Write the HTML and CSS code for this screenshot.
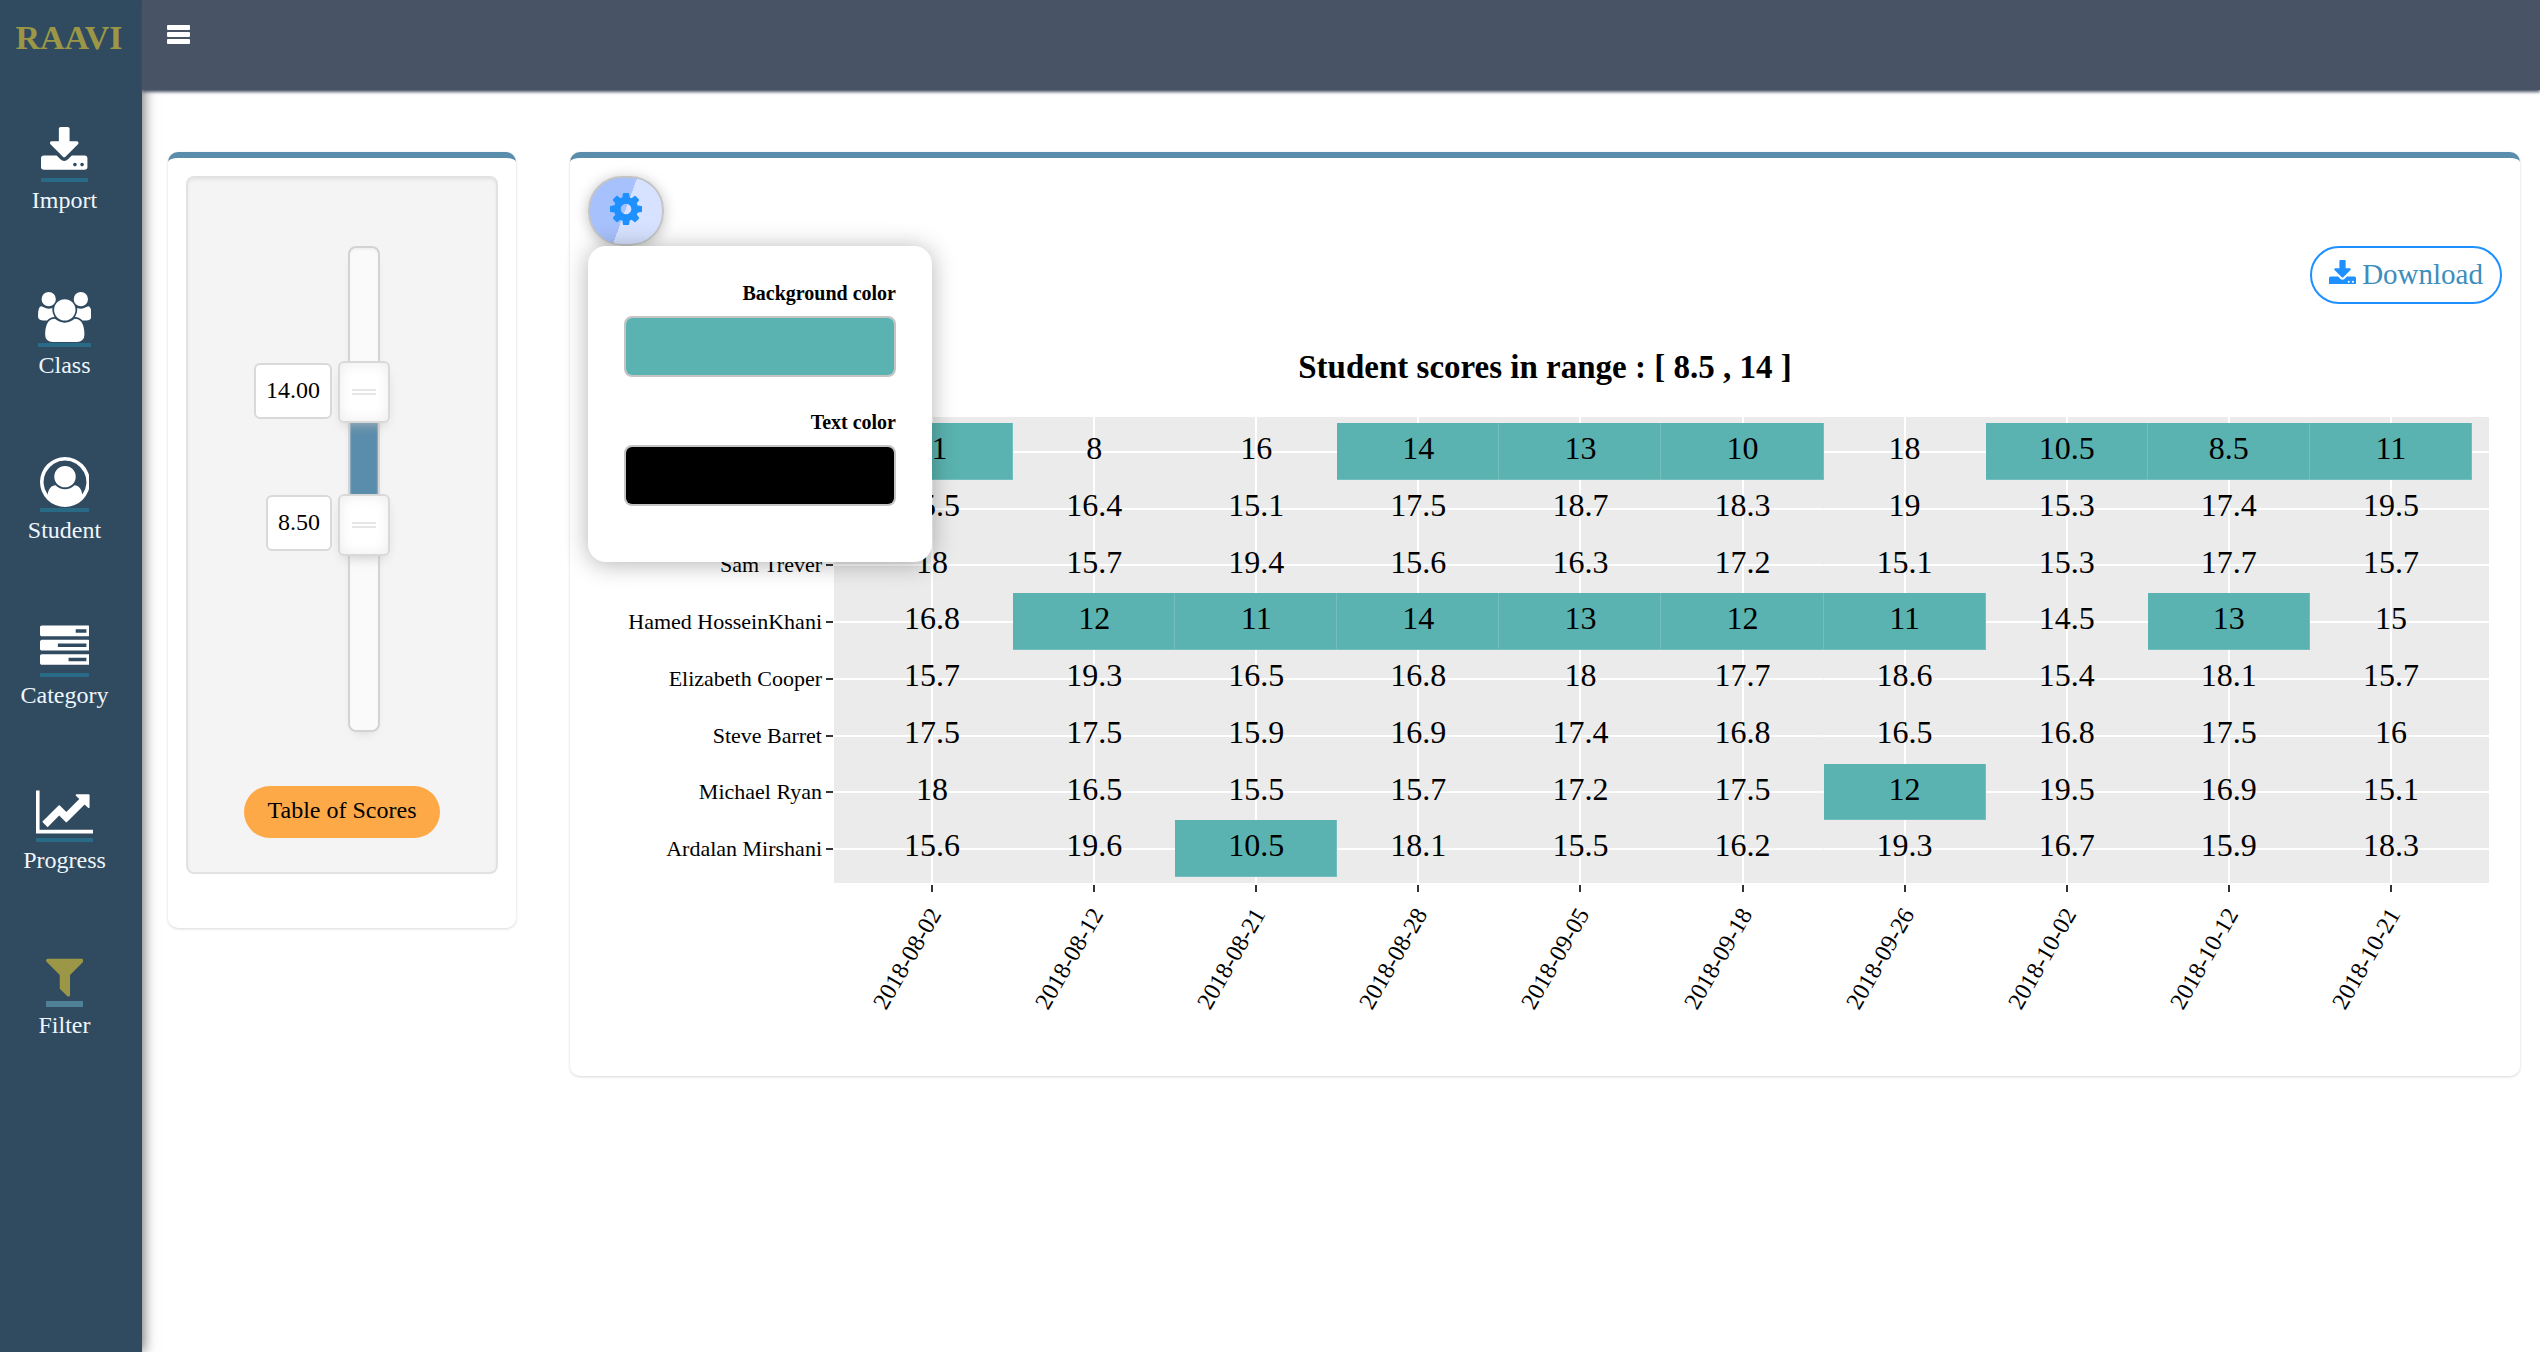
FILE: index.html
```html
<!DOCTYPE html>
<html lang="en">
<head>
<meta charset="utf-8">
<title>RAAVI</title>
<meta name="viewport" content="width=device-width, initial-scale=1">
<link rel="stylesheet" href="styles.css">
</head>
<body>
<div class="app">
  <aside class="sidebar">
    <a class="brand" href="#">RAAVI</a>
    <nav class="nav">
      <a class="nav-item" href="#">
        <svg class="nav-icon" viewBox="64 0 1664 1828" aria-hidden="true"><path d="M1344 1344q0-26-19-45t-45-19-45 19-19 45 19 45 45 19 45-19 19-45zm256 0q0-26-19-45t-45-19-45 19-19 45 19 45 45 19 45-19 19-45zm128-224v320q0 40-28 68t-68 28h-1472q-40 0-68-28t-28-68v-320q0-40 28-68t68-28h465l135 136q58 56 136 56t136-56l136-136h464q40 0 68 28t28 68zm-325-569q17 41-14 70l-448 448q-18 19-45 19t-45-19l-448-448q-31-29-14-70 17-39 59-39h256v-448q0-26 19-45t45-19h256q26 0 45 19t19 45v448h256q42 0 59 39z"/></svg>
        <span>Import</span>
      </a>
      <a class="nav-item" href="#">
        <svg class="nav-icon" viewBox="64 0 1920 1828" aria-hidden="true"><path d="M657 896q-162 5-265 128h-134q-82 0-138-40.500t-56-118.500q0-353 124-353 6 0 43.500 21t97.500 42.500 119 21.500q67 0 133-23-5 37-5 66 0 139 81 256zm1071 637q0 120-73 189.500t-194 69.500h-874q-121 0-194-69.500t-73-189.500q0-53 3.500-103.500t14-109 26.500-108.500 43-97.500 62-81 85.500-53.500 111.500-20q10 0 43 21.500t73 48 107 48 135 21.500 135-21.500 107-48 73-48 43-21.500q61 0 111.500 20t85.500 53.500 62 81 43 97.500 26.500 108.500 14 109 3.500 103.500zm-1024-1277q0 106-75 181t-181 75-181-75-75-181 75-181 181-75 181 75 75 181zm704 384q0 159-112.500 271.500t-271.500 112.500-271.500-112.500-112.500-271.500 112.500-271.500 271.500-112.500 271.500 112.500 112.500 271.500zm576 225q0 78-56 118.500t-138 40.500h-134q-103-123-265-128 81-117 81-256 0-29-5-66 66 23 133 23 59 0 119-21.500t97.500-42.500 43.500-21q124 0 124 353zm-128-609q0 106-75 181t-181 75-181-75-75-181 75-181 181-75 181 75 75 181z"/></svg>
        <span>Class</span>
      </a>
      <a class="nav-item" href="#">
        <svg class="nav-icon" viewBox="0 0 1792 1828" aria-hidden="true"><path fill-rule="evenodd" d="M896 0a896 896 0 1 1 0 1792a896 896 0 1 1 0-1792zM896 128a768 768 0 0 0-622 1218C300 1150 400 1010 556 1010Q700 1152 896 1152T1236 1010C1392 1010 1492 1150 1518 1346A768 768 0 0 0 896 128z"/><circle cx="896" cy="704" r="384"/></svg>
        <span>Student</span>
      </a>
      <a class="nav-item" href="#">
        <svg class="nav-icon" viewBox="0 0 1792 1828" aria-hidden="true"><path fill-rule="evenodd" d="M1024 1408h640v-128h-640v128zm-384-512h1024v-128h-1024v128zm640-512h384v-128h-384v128zm512 832v256q0 26-19 45t-45 19h-1664q-26 0-45-19t-19-45v-256q0-26 19-45t45-19h1664q26 0 45 19t19 45zm0-512v256q0 26-19 45t-45 19h-1664q-26 0-45-19t-19-45v-256q0-26 19-45t45-19h1664q26 0 45 19t19 45zm0-512v256q0 26-19 45t-45 19h-1664q-26 0-45-19t-19-45v-256q0-26 19-45t45-19h1664q26 0 45 19t19 45z"/></svg>
        <span>Category</span>
      </a>
      <a class="nav-item" href="#">
        <svg class="nav-icon" viewBox="0 0 2048 1828" aria-hidden="true"><path d="M2048 1536v128h-2048v-1536h128v1408h1920zm-128-1248v435q0 21-19.500 29.500t-35.500-7.500l-121-121-633 633q-10 10-23 10t-23-10l-233-233-416 416-192-192 585-585q10-10 23-10t23 10l233 233 464-464-121-121q-16-16-7.500-35.500t29.500-19.500h435q14 0 23 9t9 23z"/></svg>
        <span>Progress</span>
      </a>
      <a class="nav-item is-active" href="#" aria-current="page">
        <svg class="nav-icon" viewBox="191 0 1410 1828" aria-hidden="true"><path d="M1595 295q17 41-14 70l-493 493v742q0 42-39 59-13 5-25 5-27 0-45-19l-256-256q-19-19-19-45v-486l-493-493q-31-29-14-70 17-39 59-39h1280q42 0 59 39z"/></svg>
        <span>Filter</span>
      </a>
    </nav>
  </aside>

  <div class="page">
    <header class="topbar">
      <button class="menu-button" type="button" aria-label="Toggle menu">
        <svg viewBox="0 0 23 19" aria-hidden="true"><rect width="23" height="5" rx="1"/><rect y="7" width="23" height="5" rx="1"/><rect y="14" width="23" height="5" rx="1"/></svg>
      </button>
    </header>

    <main class="content">
      <section class="card filter-card">
        <div class="well">
          <div class="slider">
            <div class="slider-track"></div>
            <input class="slider-input" type="range" min="0" max="20" step="0.5" value="14" aria-label="Highest score">
            <input class="slider-input" type="range" min="0" max="20" step="0.5" value="8.5" aria-label="Lowest score">
            <output class="slider-value slider-value-high">14.00</output>
            <output class="slider-value slider-value-low">8.50</output>
          </div>
          <button class="scores-button" type="button">Table of Scores</button>
        </div>
      </section>

      <section class="card chart-card">
        <div class="settings">
          <button class="gear-button" type="button" aria-label="Chart settings">
            <svg viewBox="128 128 1536 1536" aria-hidden="true"><path d="M1152 896q0-106-75-181t-181-75-181 75-75 181 75 181 181 75 181-75 75-181zm512-109v222q0 12-8 23t-20 13l-185 28q-19 54-39 91 35 50 107 138 10 12 10 25t-9 23q-27 37-99 108t-94 71q-12 0-26-9l-138-108q-44 23-91 38-16 136-29 186-7 28-36 28h-222q-14 0-24.500-8.500t-11.500-21.500l-28-184q-49-16-90-37l-141 107q-10 9-25 9-14 0-25-11-126-114-165-168-7-10-7-23 0-12 8-23 15-21 51-66.500t54-70.500q-27-50-41-99l-183-27q-13-2-21-12.500t-8-23.500v-222q0-12 8-23t19-13l186-28q14-46 39-92-40-57-107-138-10-12-10-24 0-10 9-23 26-36 98.500-107.500t94.500-71.500q13 0 26 10l138 107q44-23 91-38 16-136 29-186 7-28 36-28h222q14 0 24.500 8.500t11.500 21.500l28 184q49 16 90 37l142-107q9-9 24-9 13 0 25 10 129 119 165 170 7 8 7 22 0 12-8 23-15 21-51 66.500t-54 70.500q26 50 41 98l183 28q13 2 21 12.500t8 23.500z"/></svg>
          </button>
          <div class="popover">
            <label for="bg-color">Background color</label>
            <input id="bg-color" type="color" value="#5ab3b0">
            <label for="text-color">Text color</label>
            <input id="text-color" type="color" value="#000000">
          </div>
        </div>
        <div class="actions">
          <a class="download" href="#">
            <svg viewBox="64 0 1664 1536" aria-hidden="true"><path d="M1344 1344q0-26-19-45t-45-19-45 19-19 45 19 45 45 19 45-19 19-45zm256 0q0-26-19-45t-45-19-45 19-19 45 19 45 45 19 45-19 19-45zm128-224v320q0 40-28 68t-68 28h-1472q-40 0-68-28t-28-68v-320q0-40 28-68t68-28h465l135 136q58 56 136 56t136-56l136-136h464q40 0 68 28t28 68zm-325-569q17 41-14 70l-448 448q-18 19-45 19t-45-19l-448-448q-31-29-14-70 17-39 59-39h256v-448q0-26 19-45t45-19h256q26 0 45 19t19 45v448h256q42 0 59 39z"/></svg>
            <span>Download</span>
          </a>
        </div>
        <h1 class="chart-title">Student scores in range : [ 8.5 , 14 ]</h1>
        <div class="plot">
          <table class="scores">
            <colgroup><col class="col-name"><col class="col-pad"><col span="10"><col class="col-pad"></colgroup>
            <tbody>
              <tr class="edge"><th></th><td></td><td></td><td></td><td></td><td></td><td></td><td></td><td></td><td></td><td></td><td></td><td></td></tr>
              <tr><th scope="row"></th><td></td><td class="hit">11</td><td>8</td><td>16</td><td class="hit">14</td><td class="hit">13</td><td class="hit">10</td><td>18</td><td class="hit">10.5</td><td class="hit">8.5</td><td class="hit">11</td><td></td></tr>
              <tr><th scope="row"></th><td></td><td>15.5</td><td>16.4</td><td>15.1</td><td>17.5</td><td>18.7</td><td>18.3</td><td>19</td><td>15.3</td><td>17.4</td><td>19.5</td><td></td></tr>
              <tr><th scope="row">Sam Trever</th><td></td><td>18</td><td>15.7</td><td>19.4</td><td>15.6</td><td>16.3</td><td>17.2</td><td>15.1</td><td>15.3</td><td>17.7</td><td>15.7</td><td></td></tr>
              <tr><th scope="row">Hamed HosseinKhani</th><td></td><td>16.8</td><td class="hit">12</td><td class="hit">11</td><td class="hit">14</td><td class="hit">13</td><td class="hit">12</td><td class="hit">11</td><td>14.5</td><td class="hit">13</td><td>15</td><td></td></tr>
              <tr><th scope="row">Elizabeth Cooper</th><td></td><td>15.7</td><td>19.3</td><td>16.5</td><td>16.8</td><td>18</td><td>17.7</td><td>18.6</td><td>15.4</td><td>18.1</td><td>15.7</td><td></td></tr>
              <tr><th scope="row">Steve Barret</th><td></td><td>17.5</td><td>17.5</td><td>15.9</td><td>16.9</td><td>17.4</td><td>16.8</td><td>16.5</td><td>16.8</td><td>17.5</td><td>16</td><td></td></tr>
              <tr><th scope="row">Michael Ryan</th><td></td><td>18</td><td>16.5</td><td>15.5</td><td>15.7</td><td>17.2</td><td>17.5</td><td class="hit">12</td><td>19.5</td><td>16.9</td><td>15.1</td><td></td></tr>
              <tr><th scope="row">Ardalan Mirshani</th><td></td><td>15.6</td><td>19.6</td><td class="hit">10.5</td><td>18.1</td><td>15.5</td><td>16.2</td><td>19.3</td><td>16.7</td><td>15.9</td><td>18.3</td><td></td></tr>
              <tr class="edge"><th></th><td></td><td></td><td></td><td></td><td></td><td></td><td></td><td></td><td></td><td></td><td></td><td></td></tr>
            </tbody>
            <tfoot>
              <tr><td></td><td></td><th scope="col"><div><span>2018-08-02</span></div></th><th scope="col"><div><span>2018-08-12</span></div></th><th scope="col"><div><span>2018-08-21</span></div></th><th scope="col"><div><span>2018-08-28</span></div></th><th scope="col"><div><span>2018-09-05</span></div></th><th scope="col"><div><span>2018-09-18</span></div></th><th scope="col"><div><span>2018-09-26</span></div></th><th scope="col"><div><span>2018-10-02</span></div></th><th scope="col"><div><span>2018-10-12</span></div></th><th scope="col"><div><span>2018-10-21</span></div></th><td></td></tr>
            </tfoot>
          </table>
        </div>
      </section>
    </main>
  </div>
</div>
</body>
</html>
```
FILE: styles.css
```css
* { box-sizing: border-box; }

body {
  margin: 0;
  background: #fff;
  color: #000;
  font-family: "Liberation Serif", "Times New Roman", serif;
  font-size: 24px;
}

a { color: inherit; text-decoration: none; }
button, input { font: inherit; color: inherit; cursor: pointer; }

.app { display: flex; min-height: 100vh; }

/* Sidebar */
.sidebar {
  flex: 0 0 142px;
  background: #304a60;
  box-shadow: 2px 0 12px rgba(0, 0, 0, .55);
}

.brand {
  display: block;
  height: 127px;
  padding: 18px 4px 0 0;
  color: #9b9746;
  font-size: 34px;
  font-weight: bold;
  line-height: 40px;
  text-align: center;
}

.nav {
  display: flex;
  flex-direction: column;
  align-items: center;
  gap: 78px;
  padding-right: 13px;
}

.nav-item {
  display: flex;
  flex-direction: column;
  align-items: center;
  gap: 4px;
  color: #eef7fd;
  line-height: 28px;
}

.nav-icon {
  box-sizing: content-box;
  height: 51px;
  border-bottom: 4px solid #296a87;
  fill: #fff;
}

.is-active .nav-icon {
  height: 49px;
  border-bottom: 6px solid #4f8097;
  fill: #9b9746;
}

/* Page */
.page { flex: 1; min-width: 0; }

.topbar {
  position: relative;
  height: 90px;
  padding: 25px 25px 0;
  background: #495366;
  box-shadow: 0 2px 3px #495366;
}

.menu-button {
  display: block;
  padding: 0;
  border: 0;
  background: none;
}

.menu-button svg { display: block; width: 23px; fill: #fff; }

.content {
  display: grid;
  grid-template-columns: 348px minmax(0, 1fr);
  align-items: start;
  gap: 54px;
  padding: 62px 20px 62px 26px;
}

.card {
  padding: 18px;
  border-top: 6px solid #5a8cab;
  border-radius: 10px;
  background: #fff;
  box-shadow: 0 1px 3px rgba(0, 0, 0, .16);
}

.filter-card { padding-bottom: 54px; }

.well {
  display: flex;
  flex-direction: column;
  align-items: center;
  gap: 54px;
  padding: 68px 0 34px;
  border: 2px solid #e2e2e2;
  border-radius: 8px;
  background: #f4f4f4;
  box-shadow: inset 0 2px 3px rgba(0, 0, 0, .06);
}

/* Two-handle vertical slider; the inputs lie over one shared track */
.slider {
  position: relative;
  width: 32px;
  height: 486px;
  margin-left: 44px;
}

.slider-track {
  height: 100%;
  border: 2px solid #d3d3d3;
  border-radius: 8px;
  background: linear-gradient(#5a8cab, #5a8cab) 0 143px / 100% 133px no-repeat #fafafa;
  box-shadow: inset 0 2px 2px #f0f0f0, 0 6px 12px -8px #bbb;
}

.slider-input {
  position: absolute;
  top: -30px;
  bottom: -30px;
  left: -10px;
  width: 52px;
  height: 546px;
  margin: 0;
  appearance: none;
  background: none;
  writing-mode: vertical-lr;
  direction: rtl;
  pointer-events: none;
}

.slider-input::-webkit-slider-thumb {
  width: 52px;
  height: 62px;
  appearance: none;
  border: 2px solid #d9d9d9;
  border-radius: 6px;
  background:
    linear-gradient(#e6e6e6 2px, #fff 2px, #fff 4px, #e6e6e6 4px) center / 24px 6px no-repeat #fff;
  box-shadow: inset 0 0 14px #ebebeb, 0 6px 12px -6px #bbb;
  pointer-events: auto;
}

.slider-value {
  position: absolute;
  right: 48px;
  padding: 11px 10px 13px;
  border: 2px solid #d9d9d9;
  border-radius: 6px;
  background: #fff;
  line-height: 28px;
}

.slider-value-high { top: 117px; }
.slider-value-low { top: 249px; }

.scores-button {
  height: 52px;
  padding: 0 24px 4px;
  border: 0;
  border-radius: 26px;
  background: #fda947;
}

/* Chart card */
.settings { position: relative; }

.gear-button {
  display: grid;
  place-items: center;
  width: 76px;
  height: 70px;
  padding: 0 0 4px;
  border: 2px solid #c4c4c4;
  border-radius: 34px;
  background: linear-gradient(110deg, #a7c1fc 49%, #d6e2ff 49%);
  box-shadow: 0 2px 14px rgba(0, 0, 0, .25);
}

.gear-button svg { width: 32px; fill: #1e90ff; }

.popover {
  position: absolute;
  top: 70px;
  left: 0;
  width: 344px;
  padding: 35px 36px 56px;
  border-radius: 18px;
  background: #fff;
  box-shadow: 0 2px 24px rgba(0, 0, 0, .3);
}

.popover label {
  display: block;
  margin-bottom: 11px;
  font-size: 20px;
  font-weight: bold;
  line-height: 24px;
  text-align: right;
}

.popover input {
  display: block;
  width: 100%;
  height: 61px;
  margin: 0;
  padding: 0;
  overflow: hidden;
  border: 2px solid #c4c4c4;
  border-radius: 8px;
  appearance: none;
}

.popover input + label { margin-top: 33px; }

.popover input::-webkit-color-swatch-wrapper { padding: 0; }
.popover input::-webkit-color-swatch { border: 0; }

.actions { display: flex; justify-content: flex-end; }

.download {
  display: flex;
  align-items: center;
  gap: 6px;
  height: 58px;
  padding: 0 17px 2px;
  border: 2px solid #1e90ff;
  border-radius: 29px;
  color: #3c8dbc;
  font-size: 29px;
  line-height: 32px;
}

.download svg { width: 27px; margin-bottom: 4px; fill: #1e90ff; }

.chart-title {
  margin: 43px 0 30px;
  font-size: 33px;
  line-height: 40px;
  text-align: center;
}

.plot { padding-right: 13px; }

.scores {
  width: 100%;
  table-layout: fixed;
  border-collapse: collapse;
}

.col-name { width: 246px; }
.col-pad { width: 17px; }

.scores th, .scores td { padding: 0; }

.scores tbody th {
  height: 57px;
  padding-right: 12px;
  background: linear-gradient(#333, #333) right 1px center / 7px 2px no-repeat;
  font-size: 22px;
  font-weight: normal;
  text-align: right;
}

.scores tbody tr:nth-child(4n) th { height: 56px; }

.scores tbody td {
  padding-bottom: 7px;
  background:
    linear-gradient(#fff, #fff) center / 2px 100% no-repeat,
    linear-gradient(#fff, #fff) center / 100% 2px no-repeat,
    #ebebeb;
  font-size: 32px;
  line-height: 36px;
  text-align: center;
}

.scores tbody td:nth-child(2),
.scores tbody td:last-child {
  background: linear-gradient(#fff, #fff) center / 100% 2px no-repeat #ebebeb;
}

.scores tbody td.hit {
  background: #5ab3b0;
  box-shadow: inset -1px -1px #74bfbd;
}

.scores .edge th { height: 6px; background: none; }

.scores .edge td {
  padding: 0;
  background: linear-gradient(#fff, #fff) center / 2px 100% no-repeat #ebebeb;
  line-height: 0;
}

.scores .edge td:nth-child(2),
.scores .edge td:last-child { background: #ebebeb; }

.scores tfoot th {
  height: 175px;
  padding-top: 13px;
  background: linear-gradient(#333, #333) center 2px / 2px 7px no-repeat;
  font-weight: normal;
  vertical-align: top;
}

/* The date ends under its tick and turns about that end */
.scores tfoot div {
  display: flex;
  justify-content: flex-end;
  width: calc(50% + 3px);
  line-height: 28px;
  white-space: nowrap;
}

.scores tfoot span {
  transform: rotate(-60deg);
  transform-origin: right center;
}
```
